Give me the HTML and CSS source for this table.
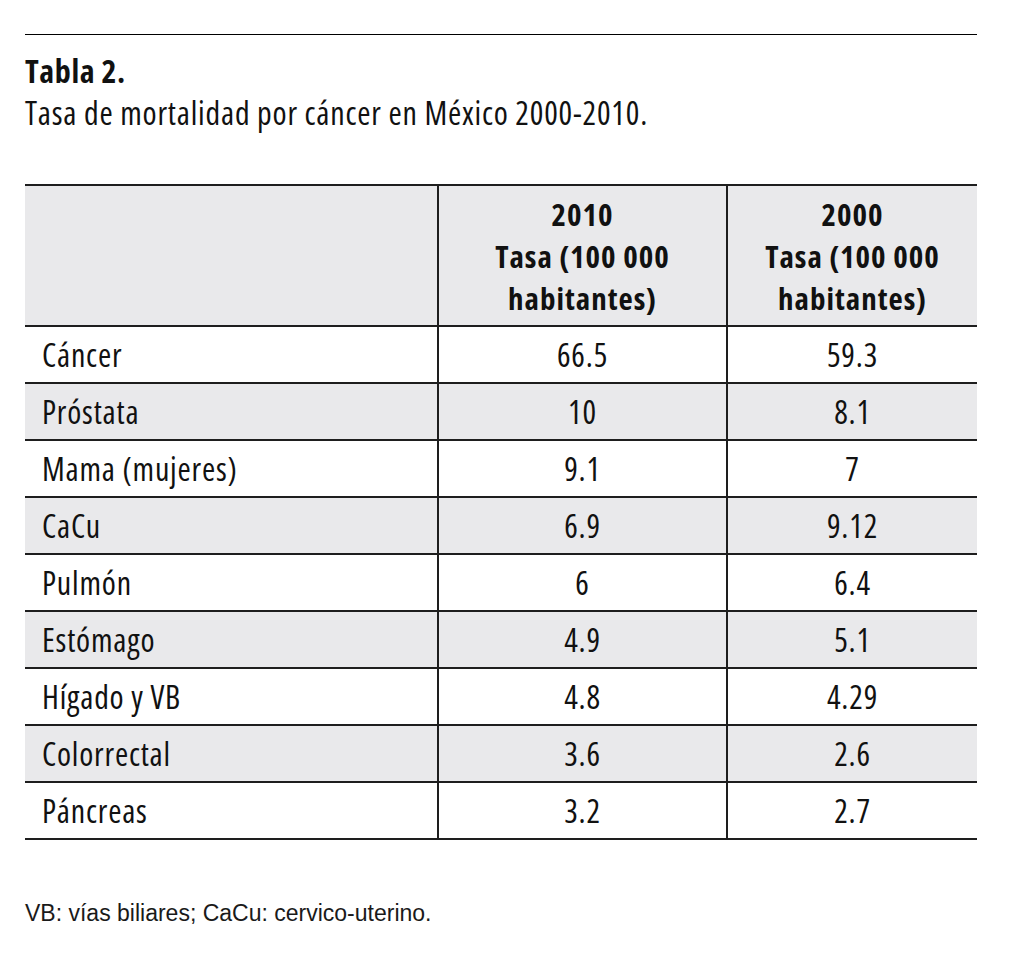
FILE: index.html
```html
<!DOCTYPE html>
<html lang="es">
<head>
<meta charset="utf-8">
<title>Tabla 2</title>
<link rel="stylesheet" href="styles.css">
</head>
<body>
<div class="sheet">
  <div class="rule"></div>
  <h1 class="title">Tabla 2.</h1>
  <p class="subtitle">Tasa de mortalidad por cáncer en México 2000-2010.</p>
  <table class="data">
    <colgroup>
      <col class="c-name">
      <col class="c-a">
      <col class="c-b">
    </colgroup>
    <thead>
      <tr class="head">
        <th></th>
        <th><span class="hl">2010</span><span class="hl">Tasa (100 000</span><span class="hl">habitantes)</span></th>
        <th><span class="hl">2000</span><span class="hl">Tasa (100 000</span><span class="hl">habitantes)</span></th>
      </tr>
    </thead>
    <tbody>
      <tr><td>Cáncer</td><td>66.5</td><td>59.3</td></tr>
      <tr class="alt"><td>Próstata</td><td>10</td><td>8.1</td></tr>
      <tr><td>Mama (mujeres)</td><td>9.1</td><td>7</td></tr>
      <tr class="alt"><td>CaCu</td><td>6.9</td><td>9.12</td></tr>
      <tr><td>Pulmón</td><td>6</td><td>6.4</td></tr>
      <tr class="alt"><td>Estómago</td><td>4.9</td><td>5.1</td></tr>
      <tr><td>Hígado y VB</td><td>4.8</td><td>4.29</td></tr>
      <tr class="alt"><td>Colorrectal</td><td>3.6</td><td>2.6</td></tr>
      <tr><td>Páncreas</td><td>3.2</td><td>2.7</td></tr>
    </tbody>
  </table>
  <p class="note">VB: vías biliares; CaCu: cervico-uterino.</p>
</div>
</body>
</html>
```
FILE: styles.css
```css
html, body {
  margin: 0;
  padding: 0;
  background: #ffffff;
}

.sheet {
  width: 952px;
  padding: 34px 39px 0 25px;
  color: #111;
  font-family: "Open Sans", "Liberation Sans", sans-serif;
  font-stretch: 75%;
}

.rule {
  border-top: 1px solid #000;
}

.title {
  margin: 17px 0 0 0;
  font-size: 32px;
  line-height: 38px;
  font-weight: 700;
  letter-spacing: 0.6px;
}

.subtitle {
  margin: 4px 0 0 0;
  font-size: 32px;
  line-height: 38px;
  font-weight: 400;
  letter-spacing: 0.8px;
}

.data {
  margin-top: 52px;
  width: 952px;
  border-collapse: collapse;
  table-layout: fixed;
}

.c-name { width: 413px; }
.c-a { width: 289px; }
.c-b { width: 250px; }

.data th,
.data td {
  border-top: 2px solid #1e1e1e;
  border-bottom: 2px solid #1e1e1e;
  padding: 0;
}

.data th + th,
.data td + td {
  border-left: 2px solid #1e1e1e;
}

.head {
  height: 141px;
  background: #e9e9eb;
}

.head th {
  font-size: 31px;
  line-height: 42px;
  font-weight: 700;
  letter-spacing: 1px;
  text-align: center;
  vertical-align: middle;
}

.hl {
  display: block;
}

.data tbody tr {
  height: 57px;
}

.data tbody td {
  font-size: 32px;
  line-height: 44px;
  letter-spacing: 0.8px;
  text-align: center;
  vertical-align: middle;
}

.data tbody td:first-child {
  text-align: left;
  padding-left: 17px;
}

.data tbody tr.alt {
  background: #e9e9eb;
}

.note {
  margin: 59px 0 0 0;
  font-family: "Liberation Sans", Arial, sans-serif;
  font-stretch: 100%;
  font-size: 23px;
  line-height: 28px;
  color: #1a1a1a;
}
```
